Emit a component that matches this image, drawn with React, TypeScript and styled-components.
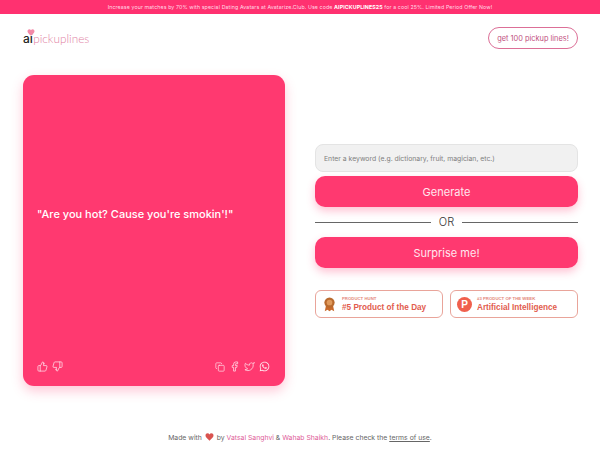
import React from "react";
import styled, { createGlobalStyle } from "styled-components";
import { ThumbsUp, ThumbsDown, Copy, Facebook, Twitter } from "lucide-react";
import { FaWhatsapp } from "react-icons/fa";

const Global = createGlobalStyle`
  html, body { margin: 0; padding: 0; background: #fff; }
  body { font-family: "Inter", "Liberation Sans", sans-serif; width: 600px; height: 450px; overflow: hidden; }
  * { box-sizing: border-box; }
`;

const Page = styled.div`
  width: 600px;
  height: 450px;
  display: flex;
  flex-direction: column;
`;

const Banner = styled.div`
  height: 14px;
  background: #ff3170;
  color: #ffd9e5;
  font-size: 5.27px;
  line-height: 14px;
  text-align: center;
  letter-spacing: 0.02em;
  white-space: nowrap;
  b { font-weight: 700; color: #fff; }
`;

const Header = styled.header`
  height: 61px;
  padding: 13px 22px 0 23px;
  display: flex;
  justify-content: space-between;
  align-items: flex-start;
`;

const Logo = styled.div`
  position: relative;
  display: flex;
  align-items: baseline;
  padding-top: 4px;
  line-height: 16px;
`;

const LogoAi = styled.span`
  color: #222;
  font-weight: 500;
  font-size: 12px;
  letter-spacing: -0.1px;
`;

const LogoName = styled.span`
  color: #e27fa3;
  font-weight: 300;
  font-family: "Lato", sans-serif;
  font-size: 11.8px;
  margin-left: 0.5px;
`;

const LogoHeart = styled.svg`
  position: absolute;
  left: 4px;
  top: 2px;
  width: 8px;
  height: 7px;
`;

const CtaButton = styled.button`
  width: 90px;
  height: 22px;
  border: 1.5px solid #dc6f97;
  border-radius: 11px;
  background: #fff;
  color: #c2517f;
  font-family: "Inter", sans-serif;
  font-size: 7.4px;
  font-weight: 400;
  padding: 0;
  white-space: nowrap;
`;

const Main = styled.main`
  padding: 0 22px 0 23px;
  display: grid;
  grid-template-columns: 262px 263px;
  column-gap: 30px;
  height: 311px;
`;

const Card = styled.section`
  background: #ff3970;
  border-radius: 11px;
  box-shadow: 0 5px 12px rgba(255, 57, 112, 0.28);
  padding: 0 15px 14px 14px;
  display: flex;
  flex-direction: column;
  color: #fff;
`;

const Quote = styled.p`
  flex: 1;
  margin: 0;
  display: flex;
  align-items: center;
  font-size: 11px;
  font-weight: 500;
  padding-bottom: 8px;
  white-space: nowrap;
`;

const CardActions = styled.div`
  display: flex;
  justify-content: space-between;
  align-items: center;
`;

const IconGroup = styled.div<{ $gap: number }>`
  display: flex;
  align-items: center;
  gap: ${(p) => p.$gap}px;
  color: #ffe7ee;
`;

const Side = styled.div`
  display: flex;
  flex-direction: column;
  padding-top: 69px;
`;

const Keyword = styled.input`
  height: 28px;
  width: 100%;
  margin-bottom: 4px;
  border: 1px solid #e4e4e4;
  border-radius: 8px;
  background: #f1f1f1;
  padding: 0 8px;
  font-family: "Inter", sans-serif;
  font-size: 6.85px;
  outline: none;
  &::placeholder { color: #808080; opacity: 1; }
`;

const PrimaryButton = styled.button`
  height: 31px;
  width: 100%;
  border: 0;
  border-radius: 10px;
  background: #ff3970;
  color: #ffe6ee;
  font-family: "Inter", sans-serif;
  font-size: 11px;
  font-weight: 400;
  box-shadow: 0 4px 9px rgba(255, 57, 112, 0.3);
`;

const OrRow = styled.div`
  height: 30px;
  display: flex;
  align-items: center;
  gap: 8px;
  color: #333;
  font-size: 11px;
  font-weight: 300;
  &::before, &::after { content: ""; flex: 1; height: 1px; background: #666; }
`;

const Badges = styled.div`
  display: grid;
  grid-template-columns: 128px 128px;
  justify-content: space-between;
  margin-top: 22px;
`;

const Badge = styled.a`
  height: 28px;
  border: 1px solid #e9a49a;
  border-radius: 6px;
  display: flex;
  align-items: center;
  gap: 5px;
  padding-left: 6px;
  color: #e25c4e;
`;

const Medal = styled.svg`
  width: 13px;
  height: 15px;
  margin: 0 1px;
`;

const BadgeText = styled.div`
  display: flex;
  flex-direction: column;
  white-space: nowrap;
`;

const BadgeLabel = styled.span`
  font-family: "Liberation Sans", sans-serif;
  font-size: 4.3px;
  line-height: 6px;
  font-weight: 700;
  color: #e4877c;
`;

const BadgeTitle = styled.span`
  font-family: "Liberation Sans", sans-serif;
  font-size: 8.2px;
  line-height: 11px;
  font-weight: 700;
`;

const PhLogo = styled.span`
  width: 15px;
  height: 15px;
  border-radius: 50%;
  background: #f0604d;
  color: #fff;
  font-family: "Liberation Sans", sans-serif;
  font-size: 10px;
  font-weight: 700;
  line-height: 15px;
  text-align: center;
`;

const Footer = styled.footer`
  margin-top: 46px;
  text-align: center;
  color: #666;
  font-size: 6.85px;
  line-height: 12px;
  white-space: nowrap;
`;

const Author = styled.span`
  color: #e0609a;
`;

const Terms = styled.span`
  text-decoration: underline;
`;

const FooterHeart = styled.svg`
  width: 9px;
  height: 8px;
  vertical-align: -1px;
  margin: 0 1px;
`;

const heart = "M12 21 C5 15 1 11.5 1 7 C1 3.5 3.7 1 7 1 C9 1 11 2 12 4 C13 2 15 1 17 1 C20.3 1 23 3.5 23 7 C23 11.5 19 15 12 21 Z";

export default function App() {
  return (
    <Page>
      <Global />
      <Banner>
        Increase your matches by 70% with special Dating Avatars at Avatarize.Club. Use code <b>AIPICKUPLINES25</b> for a cool 25%. Limited Period Offer Now!
      </Banner>
      <Header>
        <Logo>
          <LogoHeart viewBox="0 0 24 22"><path d={heart} fill="#f38aa8" /></LogoHeart>
          <LogoAi>ai</LogoAi>
          <LogoName>pickuplines</LogoName>
        </Logo>
        <CtaButton>get 100 pickup lines!</CtaButton>
      </Header>
      <Main>
        <Card>
          <Quote>"Are you hot? Cause you're smokin'!"</Quote>
          <CardActions>
            <IconGroup $gap={4}>
              <ThumbsUp size={11} strokeWidth={1.6} />
              <ThumbsDown size={11} strokeWidth={1.6} />
            </IconGroup>
            <IconGroup $gap={4}>
              <Copy size={10} strokeWidth={1.6} />
              <Facebook size={11} strokeWidth={1.6} />
              <Twitter size={11} strokeWidth={1.6} />
              <FaWhatsapp size={11} />
            </IconGroup>
          </CardActions>
        </Card>
        <Side>
          <Keyword placeholder="Enter a keyword (e.g. dictionary, fruit, magician, etc.)" />
          <PrimaryButton>Generate</PrimaryButton>
          <OrRow>OR</OrRow>
          <PrimaryButton>Surprise me!</PrimaryButton>
          <Badges>
            <Badge>
              <Medal viewBox="0 0 15 19">
                <path d="M3 11 L1.5 18 L5 16.3 L7.5 18 L10 16.3 L13.5 18 L12 11 Z" fill="#c86a2c" />
                <circle cx="7.5" cy="7" r="6.5" fill="#b96a2e" />
                <circle cx="7.5" cy="7" r="3.6" fill="#e09a5c" />
              </Medal>
              <BadgeText>
                <BadgeLabel>PRODUCT HUNT</BadgeLabel>
                <BadgeTitle>#5 Product of the Day</BadgeTitle>
              </BadgeText>
            </Badge>
            <Badge>
              <PhLogo>P</PhLogo>
              <BadgeText>
                <BadgeLabel>#3 PRODUCT OF THE WEEK</BadgeLabel>
                <BadgeTitle>Artificial Intelligence</BadgeTitle>
              </BadgeText>
            </Badge>
          </Badges>
        </Side>
      </Main>
      <Footer>
        Made with <FooterHeart viewBox="0 0 24 22"><path d={heart} fill="#d9534f" /></FooterHeart> by <Author>Vatsal Sanghvi</Author> & <Author>Wahab Shaikh</Author>. Please check the <Terms>terms of use</Terms>.
      </Footer>
    </Page>
  );
}
